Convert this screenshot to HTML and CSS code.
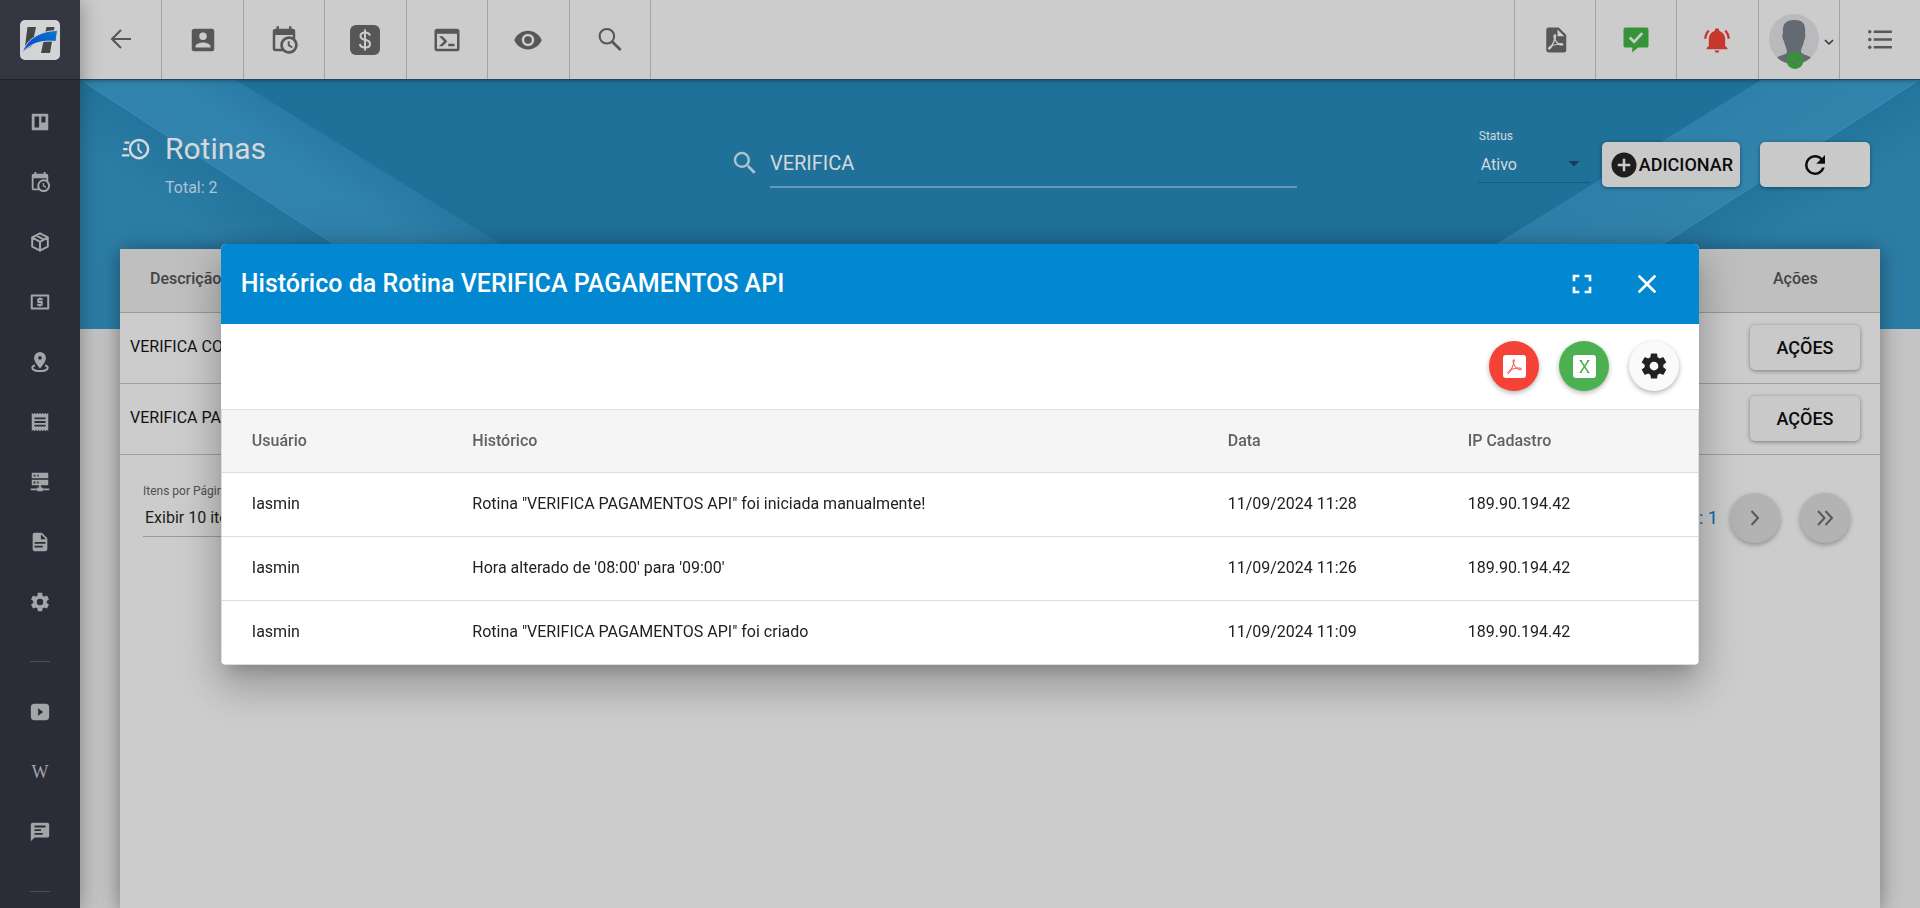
FILE: index.html
```html
<!DOCTYPE html>
<html lang="pt-BR">
<head>
<meta charset="utf-8">
<title>Rotinas</title>
<link rel="stylesheet" href="styles.css">
</head>
<body>
<svg class="defs" aria-hidden="true">
  <symbol id="i-calendar" viewBox="0 0 24 24"><path d="M15,13H16.5V15.82L18.94,17.23L18.19,18.53L15,16.69V13M19,8H5V19H9.67C9.24,18.09 9,17.07 9,16A7,7 0 0,1 16,9C17.07,9 18.09,9.24 19,9.67V8M5,21C3.89,21 3,20.1 3,19V5C3,3.89 3.89,3 5,3H6V1H8V3H16V1H18V3H19A2,2 0 0,1 21,5V11.1C22.24,12.36 23,14.09 23,16A7,7 0 0,1 16,23C14.09,23 12.36,22.24 11.1,21H5M16,11.15A4.85,4.85 0 0,0 11.15,16C11.15,18.68 13.32,20.85 16,20.85A4.85,4.85 0 0,0 20.85,16C20.85,13.32 18.68,11.15 16,11.15Z"/></symbol>
  <symbol id="i-cog" viewBox="0 0 24 24"><path d="M12,15.5A3.5,3.5 0 0,1 8.5,12A3.5,3.5 0 0,1 12,8.5A3.5,3.5 0 0,1 15.5,12A3.5,3.5 0 0,1 12,15.5M19.43,12.97C19.47,12.65 19.5,12.33 19.5,12C19.5,11.67 19.47,11.34 19.43,11L21.54,9.37C21.73,9.22 21.78,8.95 21.66,8.73L19.66,5.27C19.54,5.05 19.27,4.96 19.05,5.05L16.56,6.05C16.04,5.66 15.5,5.32 14.87,5.07L14.5,2.42C14.46,2.18 14.25,2 14,2H10C9.75,2 9.54,2.18 9.5,2.42L9.13,5.07C8.5,5.32 7.96,5.66 7.44,6.05L4.95,5.05C4.73,4.96 4.46,5.05 4.34,5.27L2.34,8.73C2.21,8.95 2.27,9.22 2.46,9.37L4.57,11C4.53,11.34 4.5,11.67 4.5,12C4.5,12.33 4.53,12.65 4.57,12.97L2.46,14.63C2.27,14.78 2.21,15.05 2.34,15.27L4.34,18.73C4.46,18.95 4.73,19.03 4.95,18.95L7.44,17.94C7.96,18.34 8.5,18.68 9.13,18.93L9.5,21.58C9.54,21.82 9.75,22 10,22H14C14.25,22 14.46,21.82 14.5,21.58L14.87,18.93C15.5,18.67 16.04,18.34 16.56,17.94L19.05,18.95C19.27,19.03 19.54,18.95 19.66,18.73L21.66,15.27C21.78,15.05 21.73,14.78 21.54,14.63L19.43,12.97Z"/></symbol>
</svg>

<div class="app">
  <aside class="sidebar">
    <a class="logo" href="#" aria-label="Início">
      <svg viewBox="0 0 40 40" width="40" height="40">
        <defs><linearGradient id="lg" x1="0" y1="1" x2="1" y2="0"><stop offset="0" stop-color="#0a3fe0"/><stop offset="1" stop-color="#0a78c4"/></linearGradient></defs>
        <rect width="40" height="40" rx="5" fill="#d2d4d6"/>
        <path d="M7.500 7H16L12 26 4.500 30Z" fill="#464648"/>
        <path d="M26.500 7H34.500L30 33H21Z" fill="#464648"/>
        <path d="M2.500 33C6 21 17 11 37.500 10.500L36 21.500C22 20 10 23 2.500 33Z" fill="url(#lg)" stroke="#d2d4d6" stroke-width="1"/>
      </svg>
    </a>
    <nav class="side-nav" aria-label="Menu">
      <a href="#" aria-label="Painel"><svg class="ic-s" viewBox="0 0 24 24"><path fill-rule="evenodd" d="M4 3H20Q21 3 21 4V20Q21 21 20 21H4Q3 21 3 20V4Q3 3 4 3ZM6 6V18H11V6ZM13.500 6V12.500H18V6Z"/></svg></a>
      <a href="#" aria-label="Agenda"><svg class="ic-s"><use href="#i-calendar"/></svg></a>
      <a href="#" aria-label="Produtos"><svg class="ic-s" viewBox="0 0 24 24"><path d="M12 2.500 20.500 7V17L12 21.500 3.500 17V7Z M3.500 7 12 11.800 20.500 7 M12 11.800V21.500 M7.800 4.800 16.200 9.500" fill="none" stroke="currentColor" stroke-width="2.200" stroke-linejoin="round"/></svg></a>
      <a href="#" aria-label="Financeiro"><svg class="ic-s" viewBox="0 0 24 24"><path d="M3 5H21V19H3Z" fill="none" stroke="currentColor" stroke-width="2.200" stroke-linejoin="round"/><path d="M11 17H13V16H14Q15 16 15 15V12Q15 11 14 11H11V10H15V8H13V7H11V8H10Q9 8 9 9V12Q9 13 10 13H13V14H9V16H11Z"/></svg></a>
      <a href="#" aria-label="Mapa"><svg class="ic-s" viewBox="0 0 24 24"><path fill-rule="evenodd" d="M12 1A6.500 6.500 0 0 1 18.500 7.500C18.500 12 12 19 12 19S5.500 12 5.500 7.500A6.500 6.500 0 0 1 12 1ZM12 5.500A2 2 0 0 0 12 9.500 2 2 0 0 0 12 5.500Z"/><path d="M6.500 15.500C1 17.500 3.500 21.800 12 21.800S23 17.500 17.500 15.500" fill="none" stroke="currentColor" stroke-width="2.200"/></svg></a>
      <a href="#" aria-label="Faturas"><svg class="ic-s" viewBox="0 0 24 24"><path fill-rule="evenodd" d="M3 2 4.500 3.500 6 2 7.500 3.500 9 2 10.500 3.500 12 2 13.500 3.500 15 2 16.500 3.500 18 2 19.500 3.500 21 2V22L19.500 20.500 18 22 16.500 20.500 15 22 13.500 20.500 12 22 10.500 20.500 9 22 7.500 20.500 6 22 4.500 20.500 3 22ZM6 7V9H18V7ZM6 11V13H18V11ZM6 15V17H18V15Z"/></svg></a>
      <a href="#" aria-label="Servidores"><svg class="ic-s" viewBox="0 0 24 24"><path fill-rule="evenodd" d="M3 2H21V8H3ZM5 4V6H7V4ZM9 4V6H10.500V4ZM3 9.500H21V15.500H3ZM5 11.500V13.500H7V11.500ZM9 11.500V13.500H10.500V11.500ZM11 15.500H13V18H15V19H22V21H15V22H9V21H2V19H9V18H11Z"/></svg></a>
      <a href="#" aria-label="Documentos"><svg class="ic-s" viewBox="0 0 24 24"><path d="M13,9H18.500L13,3.500V9M6,2H14L20,8V20A2,2 0 0,1 18,22H6C4.890,22 4,21.100 4,20V4C4,2.890 4.890,2 6,2M15,18V16H6V18H15M18,14V12H6V14H18Z"/></svg></a>
      <a href="#" aria-label="Configurações"><svg class="ic-s"><use href="#i-cog"/></svg></a>
      <hr>
      <a href="#" aria-label="Vídeos"><svg class="ic-s" viewBox="0 0 24 24"><path fill-rule="evenodd" d="M6 3H18Q22 3 22 7V17Q22 21 18 21H6Q2 21 2 17V7Q2 3 6 3ZM10 8V16L15.500 12Z"/></svg></a>
      <a class="wiki" href="#">W</a>
      <a href="#" aria-label="Chat"><svg class="ic-s" viewBox="0 0 24 24"><path fill-rule="evenodd" d="M4 2H20Q22 2 22 4V16Q22 18 20 18H6L2 22V4Q2 2 4 2ZM6 5V7H18V5ZM6 9V11H13V9ZM6 13V15H15V13Z"/></svg></a>
      <hr>
    </nav>
  </aside>

  <div class="main">
    <header class="topbar">
      <nav class="tools tools-left" aria-label="Atalhos">
        <button aria-label="Voltar"><svg class="ic" viewBox="0 0 24 24"><path d="M20 11.200H5M12 4 4.800 11.200 12 18.400" fill="none" stroke="currentColor" stroke-width="1.700"/></svg></button>
        <button aria-label="Clientes"><svg class="ic" viewBox="0 0 24 24"><path d="M6,17C6,15 10,13.9 12,13.9C14,13.9 18,15 18,17V18H6M15,9A3,3 0 0,1 12,12A3,3 0 0,1 9,9A3,3 0 0,1 12,6A3,3 0 0,1 15,9M3,5V19A2,2 0 0,0 5,21H19A2,2 0 0,0 21,19V5A2,2 0 0,0 19,3H5C3.89,3 3,3.9 3,5Z"/></svg></button>
        <button aria-label="Agenda"><svg class="ic"><use href="#i-calendar"/></svg></button>
        <button aria-label="Financeiro"><svg class="ic" viewBox="0 0 30 30"><rect width="30" height="30" rx="6"/><path d="M20 10.500Q19 7.500 15 7.500 10.500 7.500 10.500 11 10.500 14 15 14.800 20 15.700 20 19 20 22.500 15 22.500 10.500 22.500 9.800 19M15 4.500V25.500" fill="none" stroke="#ccc" stroke-width="2"/></svg></button>
        <button aria-label="Terminal"><svg class="ic" viewBox="0 0 24 24"><path d="M20,19V7H4V19H20M20,3A2,2 0 0,1 22,5V19A2,2 0 0,1 20,21H4A2,2 0 0,1 2,19V5C2,3.89 2.9,3 4,3H20M13,17V15H18V17H13M9.58,13L5.57,9H8.4L11.7,12.3C12.09,12.69 12.09,13.33 11.7,13.72L8.42,17H5.59L9.58,13Z"/></svg></button>
        <button aria-label="Visualizar"><svg class="ic" viewBox="0 0 24 24"><path d="M12,9A3,3 0 0,0 9,12A3,3 0 0,0 12,15A3,3 0 0,0 15,12A3,3 0 0,0 12,9M12,17A5,5 0 0,1 7,12A5,5 0 0,1 12,7A5,5 0 0,1 17,12A5,5 0 0,1 12,17M12,4.5C7,4.5 2.73,7.61 1,12C2.73,16.39 7,19.5 12,19.5C17,19.5 21.27,16.39 23,12C21.27,7.61 17,4.5 12,4.5Z"/></svg></button>
        <button aria-label="Pesquisar"><svg class="ic" viewBox="0 0 24 24"><circle cx="9.500" cy="9" r="5.800" fill="none" stroke="currentColor" stroke-width="1.700"/><path d="M13.600 13.200 20.500 20" fill="none" stroke="currentColor" stroke-width="2.200"/></svg></button>
      </nav>
      <nav class="tools tools-right" aria-label="Conta">
        <button aria-label="PDF"><svg class="ic" viewBox="0 0 24 24"><path d="M14,9H19.500L14,3.500V9M7,2H15L21,8V20A2,2 0 0,1 19,22H7C5.890,22 5,21.100 5,20V4A2,2 0 0,1 7,2M11.930,12.440C12.340,13.340 12.860,14.080 13.460,14.590L13.870,14.910C13,15.070 11.800,15.350 10.530,15.840V15.840L10.420,15.880L10.920,14.840C11.370,13.970 11.700,13.180 11.930,12.440M18.410,16.250C18.590,16.070 18.680,15.840 18.690,15.590C18.720,15.390 18.670,15.200 18.570,15.040C18.280,14.570 17.530,14.350 16.290,14.350L15,14.420L14.130,13.840C13.500,13.320 12.930,12.410 12.530,11.280L12.570,11.140C12.900,9.810 13.210,8.200 12.550,7.540C12.390,7.380 12.170,7.300 11.940,7.300H11.700C11.330,7.300 11,7.690 10.910,8.070C10.540,9.400 10.760,10.130 11.130,11.340V11.350C10.880,12.230 10.560,13.250 10.050,14.280L9.090,16.080L8.200,16.570C7,17.320 6.430,18.160 6.320,18.690C6.280,18.880 6.300,19.050 6.370,19.230L6.400,19.280L6.880,19.590L7.320,19.700C8.130,19.700 9.050,18.750 10.290,16.630L10.470,16.560C11.500,16.230 12.780,16 14.500,15.810C15.530,16.320 16.740,16.550 17.500,16.550C17.940,16.550 18.240,16.440 18.410,16.250Z"/></svg></button>
        <button class="green" aria-label="Mensagens"><svg class="ic" viewBox="0 0 24 24"><path d="M3.500 2H20.500Q22 2 22 3.500V16.500Q22 18 20.500 18H13.500L9 22V18H3.500Q2 18 2 16.500V3.500Q2 2 3.500 2Z"/><path d="M7 10 10.500 13.500 17 6.500" fill="none" stroke="#ccc" stroke-width="2.200"/></svg></button>
        <button class="red" aria-label="Alertas"><svg class="ic-m" viewBox="0 0 24 24"><path d="M21,19V20H3V19L5,17V11C5,7.9 7.03,5.17 10,4.29C10,4.19 10,4.1 10,4A2,2 0 0,1 12,2A2,2 0 0,1 14,4C14,4.1 14,4.19 14,4.29C16.97,5.17 19,7.9 19,11V17L21,19M14,21A2,2 0 0,1 12,23A2,2 0 0,1 10,21M19.75,3.19L18.33,4.61C20.04,6.3 21,8.6 21,11H23C23,8.07 21.84,5.25 19.75,3.19M1,11H3C3,8.6 3.96,6.3 5.67,4.61L4.25,3.19C2.16,5.25 1,8.07 1,11Z"/></svg></button>
        <button class="user" aria-label="Usuário">
          <svg viewBox="0 0 50 56" width="50" height="56">
            <circle cx="25" cy="25" r="25" fill="#b9babe"/>
            <path d="M25 6C34 6 37 10 36 19 37 21 36 25 35 27 34 33 32 34 32 38 34 41 39 41 42 43.500A25 25 0 0 1 8 43.500C11 41 17 41 18 38 18 34 16 33 15 27 13 25 13 21 14 19 13 10 17 6 25 6Z" fill="#646a72"/>
            <circle cx="26" cy="46.500" r="8.500" fill="#359438"/>
            <path d="M21 46.500 24.500 50 31 43.500" fill="none" stroke="#646a72" stroke-width="1.500"/>
          </svg>
          <svg viewBox="0 0 10 8" width="10" height="8"><path d="M1 2 5 6 9 2" fill="none" stroke="#333" stroke-width="1.500"/></svg>
        </button>
        <button aria-label="Lista"><svg class="ic" viewBox="0 0 24 24"><path d="M7 4.300H21.500V6.300H7ZM7 10.600H21.500V12.600H7ZM7 16.800H21.500V18.800H7Z"/><circle cx="3.800" cy="5.300" r="1.400"/><circle cx="3.800" cy="11.600" r="1.400"/><circle cx="3.800" cy="17.800" r="1.400"/></svg></button>
      </nav>
    </header>

    <section class="hero">
      <svg class="hero-art" viewBox="0 0 1840 250" preserveAspectRatio="none" aria-hidden="true">
        <defs>
          <linearGradient id="gl" gradientUnits="userSpaceOnUse" x1="200" y1="160" x2="268" y2="60"><stop offset="0" stop-color="#3284ad"/><stop offset=".6" stop-color="#3083ad"/><stop offset="1" stop-color="#2879a3"/></linearGradient>
          <linearGradient id="gr" gradientUnits="userSpaceOnUse" x1="1636" y1="130" x2="1565" y2="24"><stop offset="0" stop-color="#3284ad"/><stop offset="1" stop-color="#2d7fa9"/></linearGradient>
          <linearGradient id="tl" gradientUnits="userSpaceOnUse" x1="193" y1="125" x2="160" y2="175"><stop offset="0" stop-color="#24759e"/><stop offset="1" stop-color="#2c7da6"/></linearGradient>
          <linearGradient id="tr" gradientUnits="userSpaceOnUse" x1="1645" y1="125" x2="1677" y2="175"><stop offset="0" stop-color="#24759e"/><stop offset="1" stop-color="#2c7da6"/></linearGradient>
        </defs>
        <path d="M0 0 384 250H0Z" fill="url(#tl)"/>
        <path d="M0 0H156L558 250H384Z" fill="url(#gl)"/>
        <path d="M1840 0V250H1451Z" fill="url(#tr)"/>
        <path d="M1681 0H1840L1451 250H1279Z" fill="url(#gr)"/>
        <path d="M1 0 385 250M1839 0 1450 250" fill="none" stroke="#3b8db7" stroke-width="1"/>
      </svg>
      <div class="hero-row">
        <div class="title">
          <svg class="ic" viewBox="0 0 24 24"><circle cx="15.200" cy="12" r="7.300" fill="none" stroke="currentColor" stroke-width="2"/><path d="M14.700 7.500V12.500L17.500 15.300" fill="none" stroke="currentColor" stroke-width="1.600"/><path d="M3.500 6H7.500V7.800H3.500ZM2.500 11.100H6V12.900H2.500ZM1.500 16.200H7.500V18H1.500Z"/></svg>
          <div>
            <h1>Rotinas</h1>
            <p>Total: 2</p>
          </div>
        </div>
        <label class="search">
          <svg class="ic" viewBox="0 0 24 24"><path d="M9.5,3A6.500,6.500 0 0,1 16,9.500C16,11.110 15.410,12.590 14.440,13.730L14.710,14H15.500L20.500,19L19,20.500L14,15.500V14.710L13.730,14.440C12.590,15.410 11.110,16 9.500,16A6.500,6.500 0 0,1 3,9.500A6.500,6.500 0 0,1 9.500,3M9.500,5C7,5 5,7 5,9.500C5,12 7,14 9.500,14C12,14 14,12 14,9.500C14,7 12,5 9.500,5Z"/></svg>
          <input type="text" value="VERIFICA" aria-label="Pesquisar">
        </label>
        <div class="actions">
          <div class="field status">
            <label for="status">Status</label>
            <select id="status"><option>Ativo</option></select>
          </div>
          <button class="btn add"><svg class="ic" viewBox="0 0 24 24"><path fill="#1e1e1e" d="M17,13H13V17H11V13H7V11H11V7H13V11H17M12,2A10,10 0 0,0 2,12A10,10 0 0,0 12,22A10,10 0 0,0 22,12A10,10 0 0,0 12,2Z"/></svg>ADICIONAR</button>
          <button class="btn" aria-label="Atualizar"><svg class="ic" viewBox="0 0 24 24"><path d="M17.65,6.35C16.2,4.9 14.21,4 12,4A8,8 0 0,0 4,12A8,8 0 0,0 12,20C15.73,20 18.84,17.45 19.73,14H17.65C16.83,16.33 14.61,18 12,18A6,6 0 0,1 6,12A6,6 0 0,1 12,6C13.66,6 15.14,6.69 16.22,7.78L13,11H20V4L17.65,6.35Z"/></svg></button>
        </div>
      </div>
    </section>

    <section class="card">
      <table class="routines">
        <thead><tr><th>Descrição</th><th class="col-act">Ações</th></tr></thead>
        <tbody>
          <tr><td>VERIFICA CO</td><td class="col-act"><button class="btn">AÇÕES</button></td></tr>
          <tr><td>VERIFICA PAGAMENTOS API</td><td class="col-act"><button class="btn">AÇÕES</button></td></tr>
        </tbody>
      </table>
      <div class="pager">
        <div class="field per-page">
          <label for="per-page">Itens por Página</label>
          <select id="per-page"><option>Exibir 10 itens</option></select>
        </div>
        <div class="pages">
          <span class="page">Página: 1</span>
          <button class="round grey" aria-label="Próxima"><svg class="ic" viewBox="0 0 30 30"><path d="M11.500 8 18 15 11.500 22" fill="none" stroke="currentColor" stroke-width="2"/></svg></button>
          <button class="round grey" aria-label="Última"><svg class="ic" viewBox="0 0 30 30"><path d="M8 8 14.500 15 8 22M15.500 8 22 15 15.500 22" fill="none" stroke="currentColor" stroke-width="2"/></svg></button>
        </div>
      </div>
    </section>
  </div>
</div>

<div class="overlay">
  <div class="dialog" role="dialog" aria-labelledby="dlg-title">
    <header class="dialog-head">
      <h2 id="dlg-title">Histórico da Rotina VERIFICA PAGAMENTOS API</h2>
      <button aria-label="Tela cheia"><svg class="ic-l" viewBox="0 0 24 24"><path d="M5,5H10V7H7V10H5V5M14,5H19V10H17V7H14V5M17,14H19V19H14V17H17V14M10,17V19H5V14H7V17H10Z"/></svg></button>
      <button aria-label="Fechar"><svg class="ic-l" viewBox="0 0 24 24"><path d="M19,6.410L17.590,5L12,10.590L6.410,5L5,6.410L10.590,12L5,17.590L6.410,19L12,13.410L17.590,19L19,17.590L13.410,12L19,6.410Z"/></svg></button>
    </header>
    <div class="dialog-tools">
      <button class="round pdf" aria-label="Exportar PDF"><svg class="ic" viewBox="0 0 30 30"><rect x="4" y="4" width="23" height="23" rx="3" fill="#fff"/><path d="M14.800 8.500C13.500 8.500 14 13 16.500 16 18.500 18.500 22.500 19.500 22.500 18 22.500 16.500 15 16.500 10.800 19.500 8 21.500 8.500 23 9.500 22.500 12 21 16.500 8.500 14.800 8.500Z" fill="none" stroke="currentColor" stroke-width="1"/></svg></button>
      <button class="round xls" aria-label="Exportar Excel"><svg class="ic" viewBox="0 0 30 30"><rect x="4" y="4" width="23" height="23" rx="3" fill="#fff"/><path d="M11.500 9.500 19.500 21.500M19.500 9.500 11.500 21.500" fill="none" stroke="currentColor" stroke-width="1.400"/><path d="M10.500 9.500H13M18 9.500H20.500M10.500 21.500H13M18 21.500H20.500" stroke="currentColor"/></svg></button>
      <button class="round opts" aria-label="Opções"><svg class="ic"><use href="#i-cog"/></svg></button>
    </div>
    <table class="history">
      <colgroup><col class="c-user"><col><col class="c-date"><col class="c-ip"></colgroup>
      <thead><tr><th>Usuário</th><th>Histórico</th><th>Data</th><th>IP Cadastro</th></tr></thead>
      <tbody>
        <tr><td>Iasmin</td><td>Rotina "VERIFICA PAGAMENTOS API" foi iniciada manualmente!</td><td>11/09/2024 11:28</td><td>189.90.194.42</td></tr>
        <tr><td>Iasmin</td><td>Hora alterado de '08:00' para '09:00'</td><td>11/09/2024 11:26</td><td>189.90.194.42</td></tr>
        <tr><td>Iasmin</td><td>Rotina "VERIFICA PAGAMENTOS API" foi criado</td><td>11/09/2024 11:09</td><td>189.90.194.42</td></tr>
      </tbody>
    </table>
  </div>
</div>
</body>
</html>
```

FILE: styles.css
```css
* { box-sizing: border-box; }
body {
  margin: 0;
  font: 16px/20px Roboto, sans-serif;
  color: #111;
  background: #c4c4c4;
}
button, input, select { font: inherit; color: inherit; }
button { border: 0; padding: 0; background: none; display: flex; align-items: center; justify-content: center; }
svg { fill: currentColor; flex: none; display: block; }
table { width: 100%; border-collapse: collapse; }
th { font-weight: 500; text-align: left; }
.defs { position: absolute; width: 0; height: 0; }
.ic { width: 30px; height: 30px; }
.ic-m { width: 28px; height: 28px; }
.ic-l { width: 32px; height: 32px; }
.ic-s { width: 22px; height: 22px; }

.app { display: grid; grid-template-columns: 80px minmax(0, 1fr); height: 100vh; overflow: hidden; }

/* Sidebar */
.sidebar {
  background: #2b2c38;
  overflow: hidden;
  box-shadow: 0 0 20px rgba(0, 0, 0, .35);
  z-index: 2;
}
.logo {
  height: 80px;
  display: flex;
  align-items: center;
  justify-content: center;
  background: #353641;
  border-bottom: 1px solid #20212b;
}
.side-nav { padding-top: 12px; color: #a4a5a8; }
.side-nav a { height: 60px; display: flex; align-items: center; justify-content: center; color: inherit; text-decoration: none; }
.side-nav hr { width: 20px; height: 1px; margin: 29px auto 20px; border: 0; background: #4d4e58; }
.side-nav .wiki { font: 18px/20px "Liberation Serif", serif; }

.main { display: flex; flex-direction: column; min-width: 0; }

/* Top bar */
.topbar {
  height: 80px;
  flex: none;
  display: flex;
  justify-content: space-between;
  background: #ccc;
  color: #575757;
  border-bottom: 1px solid #1a4a66;
  box-shadow: 0 1px 4px rgba(0, 0, 0, .3);
  z-index: 1;
}
.tools { display: grid; }
.tools-left { grid-template-columns: repeat(7, 1fr); width: 571px; padding-left: 1px; }
.tools-right { grid-template-columns: repeat(5, 1fr); width: 406px; }
.tools-left button { border-right: 1px solid #a3a3a3; }
.tools-right button { border-left: 1px solid #a3a3a3; }
.tools .green { color: #359438; }
.tools .red { color: #c8372c; }
.tools .user { gap: 5px; padding: 4px 0 0 6px; }

/* Hero */
.hero { height: 249px; flex: none; display: grid; background: #20719a; color: #d5d9db; }
.hero-art, .hero-row { grid-area: 1 / 1; }
.hero-art { width: 100%; height: 249px; }
.hero-row {
  z-index: 1;
  display: grid;
  grid-template-columns: 610fr 567fr 181fr auto;
  align-items: start;
  padding: 0 50px 0 40px;
}
.title { display: flex; gap: 15px; padding-top: 50px; }
.title .ic { margin-top: 4px; }
.title h1 { margin: 0; font-size: 30px; line-height: 38px; font-weight: 400; }
.title p { margin: 10px 0 0; color: #a9c3d1; }
.search { display: flex; align-items: center; gap: 10px; padding-top: 58px; color: #a9c3d1; }
.search input {
  flex: 1;
  min-width: 0;
  height: 50px;
  padding: 2px 0 0;
  border: 0;
  border-bottom: 2px solid #6298b5;
  background: none;
  color: #d5d9db;
  font-size: 20px;
}
.actions { grid-column: 4; display: flex; padding-top: 47px; }
.actions .btn { margin-top: 15px; }
.actions .btn + .btn { margin-left: 20px; }
.actions .add { width: auto; padding: 0 7px; margin-left: 12px; }
.field { display: flex; flex-direction: column; }
.field label { font-size: 12px; line-height: 16px; }
.field select { appearance: none; border: 0; border-radius: 0; outline: 0; height: 38px; padding: 2px 2px 0; background: none; }
.status { width: 112px; }
.status label { padding: 1px; }
.status .status-value, .status select {
  padding-left: 3px;
  border-bottom: 1px solid #175a80;
  background: linear-gradient(to bottom left, #173f57 50%, transparent 50%) right 16px center / 5px 5px no-repeat,
    linear-gradient(to bottom right, #173f57 50%, transparent 50%) right 11px center / 5px 5px no-repeat;
}
.btn {
  width: 110px;
  height: 45px;
  border-radius: 5px;
  background: #c9c9c9;
  color: #0c0c0c;
  font-size: 18px;
  font-weight: 500;
  box-shadow: 0 1px 4px rgba(0, 0, 0, .4);
}

/* Card */
.card {
  flex: 1;
  margin: -80px 40px 0;
  background: #ccc;
  z-index: 1;
  box-shadow: 0 2px 20px rgba(0, 0, 0, .4);
}
.routines th { height: 63px; padding: 0 30px 2px; background: #bfbfbf; color: #444; border-bottom: 1px solid #999; }
.routines td { height: 71px; padding: 0 20px 2px 10px; border-bottom: 1px solid #9e9e9e; }
.routines .col-act { width: 170px; }
.routines th.col-act { padding-left: 63px; }
.routines td.col-act { padding: 0 0 0 40px; }
.pager { display: flex; justify-content: space-between; padding: 28px 30px 0 23px; }
.per-page { width: 200px; color: #1c1c1c; }
.per-page label { color: #505050; }
.per-page select { border-bottom: 1px solid #999; }
.pages { display: flex; align-items: center; gap: 20px; padding-top: 10px; }
.page { color: #026bb0; font-size: 18px; margin-right: -8px; }
.round { width: 50px; height: 50px; border-radius: 50%; box-shadow: 0 2px 5px rgba(0, 0, 0, .3); }
.grey { background: #b3b3b3; color: #595959; }

/* Dialog */
.overlay { position: fixed; inset: 0; z-index: 10; display: flex; align-items: center; justify-content: center; }
.dialog {
  width: 77%;
  background: #fff;
  border-radius: 5px;
  overflow: hidden;
  box-shadow: 0 11px 15px -7px rgba(0, 0, 0, .2), 0 24px 38px 3px rgba(0, 0, 0, .14), 0 9px 46px 8px rgba(0, 0, 0, .12);
}
.dialog-head { height: 80px; display: flex; align-items: center; padding: 0 20px; background: #0288d1; color: #fff; }
.dialog-head h2 { flex: 1; margin: 0; font-size: 25px; line-height: 32px; font-weight: 500; }
.dialog-head button { width: 65px; height: 65px; }
.dialog-tools { display: flex; justify-content: flex-end; gap: 20px; padding: 17px 20px 18px; }
.pdf { background: #f44336; color: #f44336; }
.xls { background: #4caf50; color: #4caf50; }
.opts { background: #fafafa; color: #212121; }
.history { table-layout: fixed; border: 1px solid #ddd; }
.history .c-user { width: 221px; }
.history .c-date { width: 240px; }
.history .c-ip { width: 261px; }
.history th, .history td { padding: 0 30px; border-bottom: 1px solid #ddd; }
.history th { height: 63px; background: #f5f5f5; color: #616161; }
.history td { height: 64px; color: #212121; }
```
